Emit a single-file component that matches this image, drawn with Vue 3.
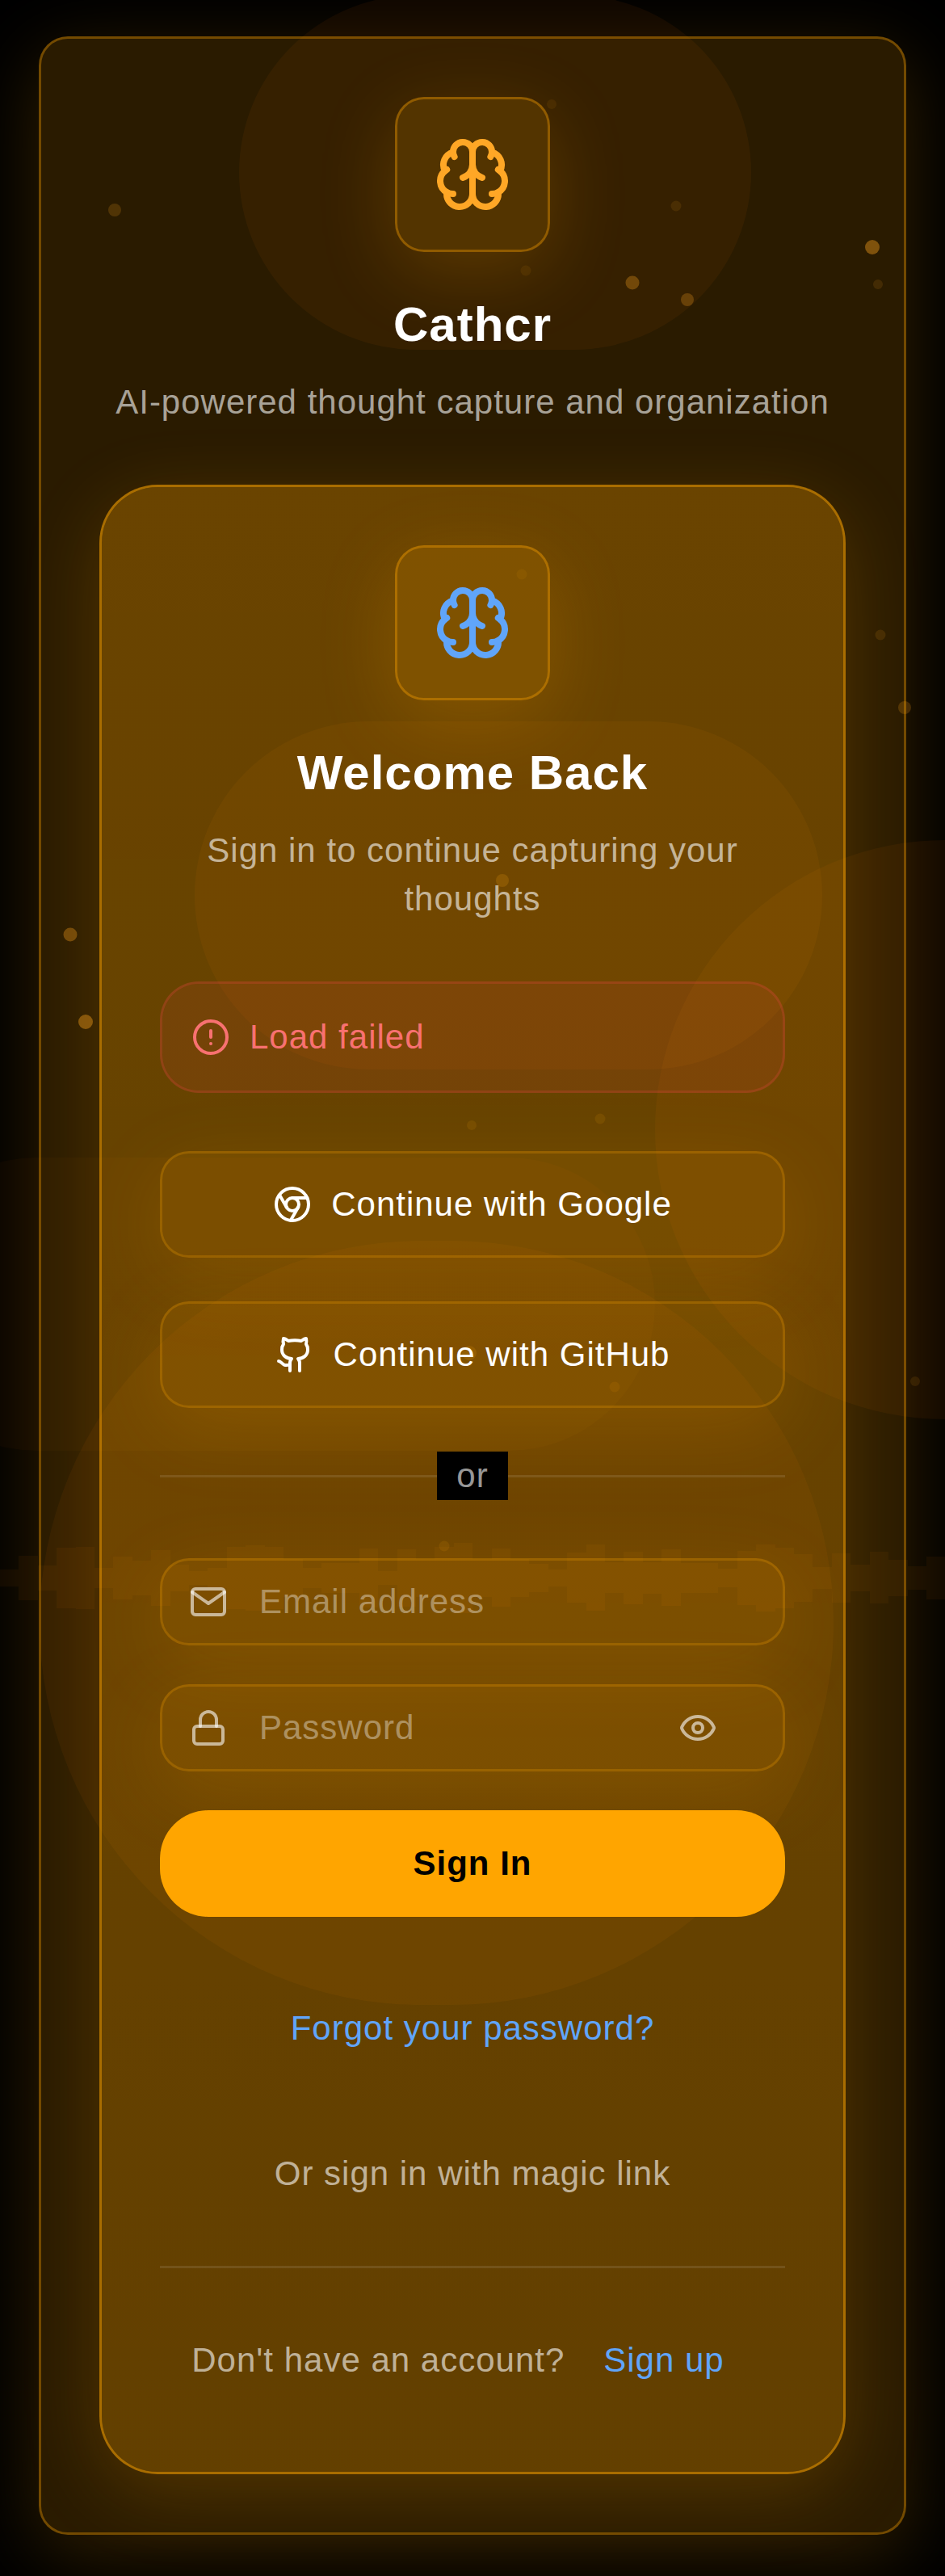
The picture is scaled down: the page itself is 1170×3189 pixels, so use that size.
<script setup>
import { ref } from 'vue'

const email = ref('')
const password = ref('')
const showPassword = ref(false)

// Floating particles: x in percent of the width, y in px, diameter, opacity
const particles = [
  { x: 58.4, y: 129, d: 12, o: 0.08 },
  { x: 12.1, y: 260, d: 16, o: 0.18 },
  { x: 71.5, y: 255, d: 13, o: 0.1 },
  { x: 92.3, y: 306, d: 18, o: 0.4 },
  { x: 55.6, y: 335, d: 13, o: 0.08 },
  { x: 66.9, y: 350, d: 17, o: 0.3 },
  { x: 72.7, y: 371, d: 16, o: 0.25 },
  { x: 92.9, y: 352, d: 12, o: 0.12 },
  { x: 55.2, y: 711, d: 13, o: 0.08 },
  { x: 93.2, y: 786, d: 13, o: 0.12 },
  { x: 95.7, y: 876, d: 16, o: 0.2 },
  { x: 53.2, y: 1090, d: 16, o: 0.18 },
  { x: 7.4, y: 1157, d: 17, o: 0.33 },
  { x: 9.1, y: 1265, d: 18, o: 0.4 },
  { x: 49.9, y: 1393, d: 12, o: 0.1 },
  { x: 63.5, y: 1385, d: 13, o: 0.1 },
  { x: 49.7, y: 1675, d: 18, o: 0.15 },
  { x: 65, y: 1717, d: 13, o: 0.09 },
  { x: 96.8, y: 1710, d: 12, o: 0.1 },
  { x: 47, y: 1914, d: 13, o: 0.1 },
]

const bars = [
  21, 55, 31, 75, 77, 25, 53, 43, 69, 33, 17, 25, 77, 81, 77, 47, 25, 37, 37, 73, 17, 71, 47, 77, 87,
  47, 72, 47, 35, 21, 62, 82, 38, 65, 39, 70, 37, 37, 23, 67, 83, 75, 59, 27, 61, 33, 64, 45, 29, 53,
]
</script>

<template>
  <div class="page">
    <div class="backdrop" aria-hidden="true">
      <div class="blob blob-top"></div>
      <div class="blob blob-middle"></div>
      <div class="blob blob-right"></div>
      <div class="blob blob-left"></div>
      <div class="blob blob-bottom"></div>
      <div class="wave">
        <span v-for="(h, i) in bars" :key="i" class="bar" :style="{ height: h + 'px' }"></span>
      </div>
      <span
        v-for="(p, i) in particles"
        :key="i"
        class="particle"
        :style="{ left: p.x + '%', top: p.y + 'px', width: p.d + 'px', height: p.d + 'px', opacity: p.o }"
      ></span>
    </div>

    <main class="frame">
      <header class="intro">
        <div class="badge badge-orange">
          <svg class="brain" viewBox="0 0 24 24" aria-hidden="true">
            <path d="M12 5a3 3 0 1 0-5.997.125 4 4 0 0 0-2.526 5.77 4 4 0 0 0 .556 6.588A4 4 0 1 0 12 18Z" />
            <path d="M12 5a3 3 0 1 1 5.997.125 4 4 0 0 1 2.526 5.77 4 4 0 0 1-.556 6.588A4 4 0 1 1 12 18Z" />
            <path d="M15 13a4.5 4.5 0 0 1-3-4 4.5 4.5 0 0 1-3 4" />
            <path d="M17.599 6.5a3 3 0 0 0 .399-1.375" />
            <path d="M6.003 5.125A3 3 0 0 0 6.401 6.5" />
            <path d="M3.477 10.896a4 4 0 0 1 .585-.396" />
            <path d="M19.938 10.5a4 4 0 0 1 .585.396" />
            <path d="M6 18a4 4 0 0 1-1.967-.516" />
            <path d="M19.967 17.484A4 4 0 0 1 18 18" />
          </svg>
        </div>
        <h1 class="title">Cathcr</h1>
        <p class="subtitle">AI-powered thought capture and organization</p>
      </header>

      <section class="card">
        <div class="intro">
          <div class="badge badge-blue">
            <svg class="brain" viewBox="0 0 24 24" aria-hidden="true">
              <path d="M12 5a3 3 0 1 0-5.997.125 4 4 0 0 0-2.526 5.77 4 4 0 0 0 .556 6.588A4 4 0 1 0 12 18Z" />
              <path d="M12 5a3 3 0 1 1 5.997.125 4 4 0 0 1 2.526 5.77 4 4 0 0 1-.556 6.588A4 4 0 1 1 12 18Z" />
              <path d="M15 13a4.5 4.5 0 0 1-3-4 4.5 4.5 0 0 1-3 4" />
              <path d="M17.599 6.5a3 3 0 0 0 .399-1.375" />
              <path d="M6.003 5.125A3 3 0 0 0 6.401 6.5" />
              <path d="M3.477 10.896a4 4 0 0 1 .585-.396" />
              <path d="M19.938 10.5a4 4 0 0 1 .585.396" />
              <path d="M6 18a4 4 0 0 1-1.967-.516" />
              <path d="M19.967 17.484A4 4 0 0 1 18 18" />
            </svg>
          </div>
          <h2 class="title">Welcome Back</h2>
          <p class="subtitle">Sign in to continue capturing your thoughts</p>
        </div>

        <div class="alert" role="alert">
          <svg class="icon" viewBox="0 0 24 24" aria-hidden="true">
            <circle cx="12" cy="12" r="10" />
            <path d="M12 8v4M12 16h.01" />
          </svg>
          <span>Load failed</span>
        </div>

        <div class="providers">
          <button type="button" class="provider">
            <svg class="icon" viewBox="0 0 24 24" aria-hidden="true">
              <circle cx="12" cy="12" r="10" />
              <circle cx="12" cy="12" r="4" />
              <path d="M21.17 8H12M3.95 6.06 8.54 14M10.88 21.94 15.46 14" />
            </svg>
            <span>Continue with Google</span>
          </button>
          <button type="button" class="provider">
            <svg class="icon" viewBox="0 0 24 24" aria-hidden="true">
              <path
                d="M15 22v-4a4.8 4.8 0 0 0-1-3.5c3 0 6-2 6-5.5.08-1.25-.27-2.48-1-3.5.28-1.15.28-2.35 0-3.5 0 0-1 0-3 1.5-2.64-.5-5.36-.5-8 0C6 2 5 2 5 2c-.3 1.15-.3 2.35 0 3.5A5.403 5.403 0 0 0 4 9c0 3.5 3 5.5 6 5.5-.39.49-.68 1.05-.85 1.65-.17.6-.22 1.23-.15 1.85v4"
              />
              <path d="M9 18c-4.51 2-5-2-7-2" />
            </svg>
            <span>Continue with GitHub</span>
          </button>
        </div>

        <div class="divider"><span class="divider-text">or</span></div>

        <form class="form" @submit.prevent>
          <div class="field">
            <svg class="icon" viewBox="0 0 24 24" aria-hidden="true">
              <path d="M4 4h16c1.1 0 2 .9 2 2v12c0 1.1-.9 2-2 2H4c-1.1 0-2-.9-2-2V6c0-1.1.9-2 2-2z" />
              <path d="m22 6-10 7L2 6" />
            </svg>
            <input v-model="email" class="input" type="email" placeholder="Email address" aria-label="Email address" />
          </div>
          <div class="field">
            <svg class="icon" viewBox="0 0 24 24" aria-hidden="true">
              <rect x="3" y="11" width="18" height="11" rx="2" />
              <path d="M7 11V7a5 5 0 0 1 10 0v4" />
            </svg>
            <input
              v-model="password"
              class="input"
              :type="showPassword ? 'text' : 'password'"
              placeholder="Password"
              aria-label="Password"
            />
            <button type="button" class="reveal" aria-label="Show password" @click="showPassword = !showPassword">
              <svg class="icon" viewBox="0 0 24 24" aria-hidden="true">
                <path
                  d="M2.062 12.348a1 1 0 0 1 0-.696 10.75 10.75 0 0 1 19.876 0 1 1 0 0 1 0 .696 10.75 10.75 0 0 1-19.876 0"
                />
                <circle cx="12" cy="12" r="3" />
              </svg>
            </button>
          </div>
          <button type="submit" class="submit">Sign In</button>
        </form>

        <div class="links">
          <a href="#forgot" class="link link-blue">Forgot your password?</a>
          <a href="#magic" class="link">Or sign in with magic link</a>
        </div>

        <div class="signup">
          <span>Don't have an account?</span>
          <a href="#signup" class="link link-blue">Sign up</a>
        </div>
      </section>
    </main>
  </div>
</template>

<style>
body {
  margin: 0;
  background: #000;
}
</style>

<style scoped>
.page {
  position: relative;
  box-sizing: border-box;
  min-height: 100vh;
  padding: 45px 48px 51px;
  overflow: hidden;
  background: #000;
  color: #fff;
  font-family: "Liberation Sans", Arial, sans-serif;
  font-size: 42px;
  line-height: 60px;
  letter-spacing: 1px;
}

.backdrop {
  position: absolute;
  inset: 0;
  overflow: hidden;
}

.blob {
  position: absolute;
  border-radius: 999px;
  background: rgba(255, 120, 0, 0.06);
}
.blob-top { left: 296px; top: -6px; width: 634px; height: 439px; }
.blob-middle { left: 241px; top: 893px; width: 777px; height: 431px; }
.blob-right { left: 811px; top: 1040px; width: 717px; height: 717px; }
.blob-left {
  left: -136px;
  top: 1433px;
  width: 947px;
  height: 363px;
  background: rgba(255, 120, 0, 0.03);
}
.blob-bottom { left: 49px; top: 1536px; width: 983px; height: 946px; }

.wave {
  position: absolute;
  left: 0;
  right: 0;
  top: 1903px;
  height: 100px;
  display: flex;
  align-items: center;
}
.bar {
  flex: 1;
  background: rgba(255, 140, 0, 0.05);
}

.particle {
  position: absolute;
  border-radius: 50%;
  background: #ffa526;
  transform: translate(-50%, -50%);
}

.frame {
  position: relative;
  padding: 72px;
  border: 3px solid rgba(255, 165, 0, 0.45);
  border-radius: 36px;
  background: rgba(255, 165, 0, 0.165);
  background-clip: padding-box;
  box-shadow: 0 24px 96px rgba(255, 165, 0, 0.2);
}

.intro {
  display: flex;
  flex-direction: column;
  align-items: center;
  text-align: center;
  margin-bottom: 72px;
}

.badge {
  display: flex;
  align-items: center;
  justify-content: center;
  box-sizing: border-box;
  width: 192px;
  height: 192px;
  margin-bottom: 48px;
  border: 3px solid rgba(255, 165, 0, 0.45);
  border-radius: 36px;
  background: rgba(255, 165, 0, 0.15);
  background-clip: padding-box;
  box-shadow: 0 24px 96px rgba(255, 165, 0, 0.2);
}
.badge-orange { color: #ffa726; }
.badge-blue { color: #60a5fa; }

.brain,
.icon {
  flex: none;
  fill: none;
  stroke: currentColor;
  stroke-width: 2;
  stroke-linecap: round;
  stroke-linejoin: round;
}
.brain { width: 96px; height: 96px; }
.brain { stroke-width: 2; }
.icon { display: block; width: 48px; height: 48px; }

.title {
  margin: 0 0 24px;
  font-size: 60px;
  line-height: 84px;
  font-weight: 700;
}

.subtitle {
  margin: 0;
  color: rgba(255, 255, 255, 0.6);
}

.card {
  padding: 72px;
  border: 3px solid rgba(255, 165, 0, 0.6);
  border-radius: 72px;
  background: linear-gradient(rgba(255, 165, 0, 0.3), rgba(255, 165, 0, 0.27));
  background-clip: padding-box;
  box-shadow: 0 24px 96px rgba(255, 165, 0, 0.2);
}

.alert {
  display: flex;
  align-items: center;
  gap: 24px;
  padding: 36px;
  margin-bottom: 72px;
  border: 3px solid rgba(239, 68, 68, 0.3);
  border-radius: 48px;
  background: rgba(239, 68, 68, 0.1);
  background-clip: padding-box;
  color: #f87171;
}

.providers {
  display: flex;
  flex-direction: column;
  gap: 54px;
}

.provider {
  display: flex;
  align-items: center;
  justify-content: center;
  gap: 24px;
  padding: 33px;
  border: 3px solid rgba(255, 165, 0, 0.3);
  border-radius: 36px;
  background: rgba(255, 165, 0, 0.1);
  background-clip: padding-box;
  box-shadow: 0 24px 96px rgba(255, 165, 0, 0.15);
  color: inherit;
  font: inherit;
  letter-spacing: inherit;
}

.divider {
  display: flex;
  align-items: center;
  margin: 54px 0 72px;
}
.divider::before,
.divider::after {
  content: "";
  flex: 1;
  height: 3px;
  background: rgba(255, 255, 255, 0.1);
}
.divider-text {
  padding: 0 24px;
  background: #000;
  color: rgba(255, 255, 255, 0.6);
}

.form {
  display: flex;
  flex-direction: column;
  gap: 48px;
}

.field {
  display: flex;
  align-items: center;
  gap: 39px;
  box-sizing: border-box;
  height: 108px;
  padding: 0 81px 0 33px;
  border: 3px solid rgba(255, 165, 0, 0.3);
  border-radius: 36px;
  background: rgba(255, 165, 0, 0.1);
  background-clip: padding-box;
  box-shadow: 0 24px 96px rgba(255, 165, 0, 0.15);
  color: rgba(255, 255, 255, 0.6);
}

.input {
  flex: 1;
  min-width: 0;
  padding: 0;
  border: 0;
  outline: 0;
  background: transparent;
  color: #fff;
  font: inherit;
  letter-spacing: inherit;
}
.input::placeholder {
  color: rgba(255, 255, 255, 0.4);
  opacity: 1;
}

.reveal {
  padding: 0;
  border: 0;
  background: transparent;
  color: inherit;
}

.submit {
  position: relative;
  padding: 36px;
  border: 0;
  border-radius: 60px;
  background: #ffa500;
  color: #000;
  font: inherit;
  font-weight: 700;
  letter-spacing: inherit;
}

.links {
  display: flex;
  flex-direction: column;
  align-items: center;
  gap: 48px;
  margin: 72px 0 48px;
}

.link {
  padding: 36px;
  color: rgba(255, 255, 255, 0.6);
  text-decoration: none;
}
.link-blue { color: #60a5fa; }

.signup {
  display: flex;
  align-items: center;
  justify-content: center;
  gap: 12px;
  padding-top: 48px;
  border-top: 3px solid rgba(255, 255, 255, 0.1);
  color: rgba(255, 255, 255, 0.6);
}
</style>
